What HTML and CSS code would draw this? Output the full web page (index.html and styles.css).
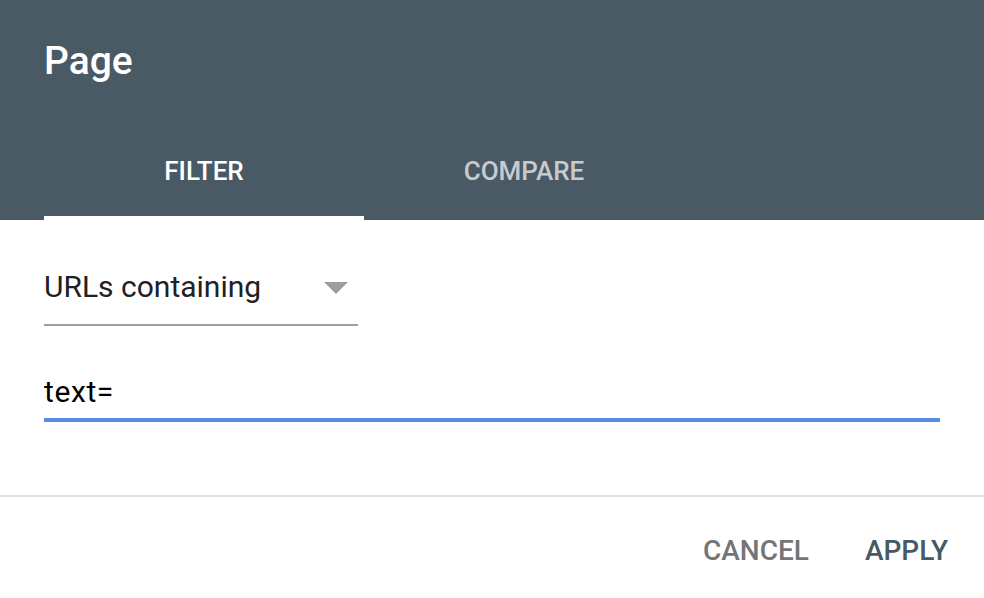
FILE: index.html
```html
<!DOCTYPE html>
<html>
<head>
<meta charset="utf-8">
<link rel="stylesheet" href="styles.css">
</head>
<body>
<div class="dialog">
  <header class="head">
    <h1 class="title">Page</h1>
    <nav class="tabs">
      <div class="tab active">FILTER</div>
      <div class="tab">COMPARE</div>
    </nav>
  </header>
  <section class="body">
    <div class="select">
      <span class="select-label">URLs containing</span>
      <svg class="arrow" width="24" height="12" viewBox="0 0 24 12"><path d="M0 0 L24 0 L12 12 Z" fill="#9e9e9e"/></svg>
    </div>
    <div class="input">text=</div>
  </section>
  <footer class="actions">
    <span class="btn cancel">CANCEL</span>
    <span class="btn apply">APPLY</span>
  </footer>
</div>
</body>
</html>
```
FILE: styles.css
```css
* { box-sizing: border-box; }
html, body { margin: 0; padding: 0; background: #fff; }
body { font-family: Roboto, "Noto Sans", sans-serif; width: 984px; height: 598px; overflow: hidden; }
.dialog { display: flex; flex-direction: column; }
.head { background: #4a5a65; height: 220px; padding: 0 44px; display: flex; flex-direction: column; }
.title { margin: 0; padding-top: 37px; font-size: 39px; font-weight: 500; color: #fff; line-height: 48px; height: 132px; }
.tabs { display: flex; }
.tab { width: 320px; height: 88px; text-align: center; font-size: 26px; font-weight: 500; color: rgba(255,255,255,0.7); line-height: 78px; border-bottom: 4px solid transparent; }
.tab.active { color: #fff; border-bottom-color: #fff; }
.body { padding: 0 44px; height: 277px; border-bottom: 2px solid #e0e0e0; }
.select { width: 314px; margin-top: 47px; height: 59px; border-bottom: 2px solid #9e9e9e; display: flex; align-items: flex-start; justify-content: space-between; padding-right: 10px; }
.select-label { font-size: 30px; color: #212121; line-height: 40px; }
.arrow { margin-top: 15px; }
.input { margin-top: 46px; height: 50px; font-size: 30px; letter-spacing: 0.6px; color: #000; line-height: 40px; border-bottom: 4px solid #5a8ae6; }
.actions { display: flex; justify-content: flex-end; padding: 34px 36px 0 0; gap: 56px; }
.btn { font-size: 28px; font-weight: 500; line-height: 40px; }
.cancel { color: #757575; }
.apply { color: #455a64; }
```
